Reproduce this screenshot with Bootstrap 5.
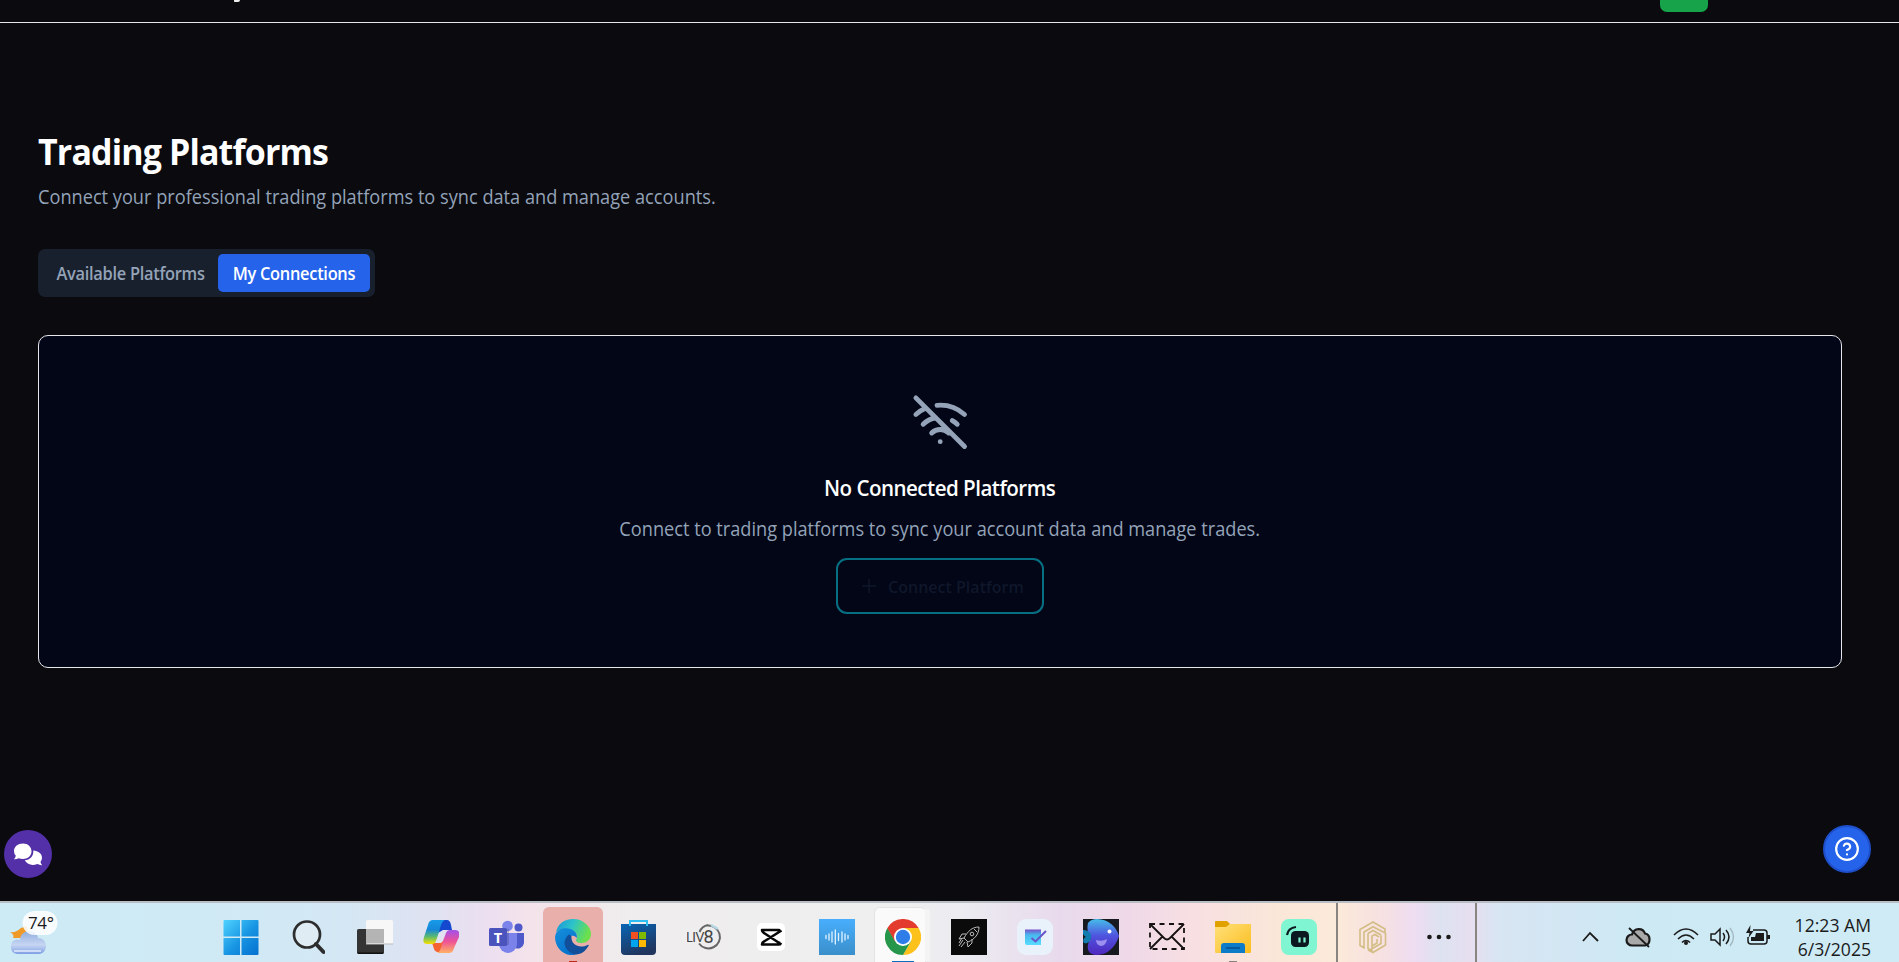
<!DOCTYPE html>
<html lang="en">
<head>
<meta charset="utf-8">
<title>Trading Platforms</title>
<link href="https://cdn.jsdelivr.net/npm/bootstrap@5.3.0/dist/css/bootstrap.min.css" rel="stylesheet">
<style>
body{font-family:"Open Sans","Noto Sans",sans-serif;background:#0a0a0f;color:#fff;width:1899px;height:962px;overflow:hidden}
.ln{line-height:28px;white-space:nowrap}
/* slightly narrowed text */
.narrow{display:inline-block;white-space:nowrap;transform:scaleX(.943)}
.from-left{transform-origin:0 50%}
.topbar{height:23px;border-bottom:1px solid #e5e7eb}
.brand-tail{left:234px;top:0;width:6px;height:2px;background:#eee;border-radius:0 0 3px 1px}
.go-btn{left:1660px;top:-28px;width:48px;height:40px;background:#16a34a;border-radius:7px}
main{height:878px;padding:107px 57px 0 38px}
h1{font-size:36px;line-height:44px;font-weight:700;margin:0 0 9px;letter-spacing:-.9px}
.muted{color:#94a3b8;font-size:19.3px}
.tabs{width:337px;height:48px;background:#18202d;border-radius:7px;padding:5px;margin-top:38px}
.tabs button{font-size:17.4px;font-weight:600;border:0;background:none;color:#94a3b8;height:38px;border-radius:5px;padding:0;letter-spacing:-.3px}
.tabs .on{background:#2563eb;color:#fff;width:152px}
.tabs .off{width:175px}
.panel{height:333px;margin-top:38px;background:#020617;border:1px solid #e5e7eb;border-radius:10px;padding-top:57px}
.panel h2{font-size:21.8px;font-weight:600;margin:23px 0 0;line-height:28px;letter-spacing:-.55px}
.panel .muted{margin-top:13px}
.connect{width:208px;height:56px;border:2px solid #076f82;border-radius:11px;color:#0f172a;font-size:17px;font-weight:600;margin-top:15px;padding-left:24px}
.fab{width:48px;height:48px;border-radius:50%}
.chat{left:4px;top:830px;background:#5330a8}
.help{left:1823px;top:825px;background:#2563eb;border:2px solid #1e4fc9}
.taskbar{height:61px;border-top:2px solid #b9bec5;color:#1b1b1b;background:linear-gradient(90deg,#cdebf5 0,#cfeaf5 190px,#d3e8f4 330px,#dfe2f1 430px,#ecdff0 490px,#f4e3ea 530px,#efedee 630px,#efefef 900px,#ececf1 960px,#e8daec 1060px,#efd9e8 1130px,#f7dfe2 1190px,#fae7d8 1280px,#fbe9d9 1340px,#f7e1e1 1380px,#eedcf1 1415px,#dde2f1 1440px,#e6dff0 1470px,#d7e5f2 1500px,#cde9f4 1640px,#ceebf6 1899px)}
.cell{width:66px;height:59px;padding-top:16px;flex:none}
.cell svg{display:block;margin:auto}
.weather{width:208px;height:59px}
.apps-edge{background:#e9afab;width:60px;margin:4px 3px 0;height:55px;padding-top:12px;border-radius:6px 6px 0 0}
.apps-chrome{background:#fafafa;width:50px;margin:5px 11px 0 5px;height:54px;padding-top:11px;border-radius:5px 5px 0 0;box-shadow:6px 0 0 -1px #f4f4f4,0 0 0 1px #e3e3e3}
.apps-chrome svg{margin-left:10px}
.mark-line{left:50%;bottom:0;height:1.5px;transform:translateX(-50%)}
.vr-line{width:2px;height:59px;background:#8a8480}
.clock{font-size:17.6px;line-height:24px;color:#1b1b1b;padding:10px 28px 0 0;width:122px}
</style>
</head>
<body class="position-relative">
<header class="topbar position-relative overflow-hidden">
<span class="brand-tail position-absolute"></span><span class="go-btn position-absolute"></span>
</header>
<main>
<h1><span class="narrow from-left">Trading Platforms</span></h1>
<p class="muted ln mb-0"><span class="narrow from-left">Connect your professional trading platforms to sync data and manage accounts.</span></p>
<div class="tabs d-flex"><button class="off"><span class="narrow">Available Platforms</span></button><button class="on"><span class="narrow">My Connections</span></button></div>
<section class="panel d-flex flex-column align-items-center">
<svg width="58.4" height="58.4" viewBox="0 0 24 24" fill="none" stroke="#94a3b8" stroke-width="2" stroke-linecap="round" stroke-linejoin="round"><path d="M12 20h.01M8.5 16.429a5 5 0 0 1 7 0M5 12.859a10 10 0 0 1 5.17-2.69M19 12.859a10 10 0 0 0-2.007-1.523M2 8.82a15 15 0 0 1 4.177-2.643M22 8.82a15 15 0 0 0-11.288-3.764M2 2l20 20"/></svg>
<h2><span class="narrow">No Connected Platforms</span></h2>
<p class="muted ln mb-0"><span class="narrow">Connect to trading platforms to sync your account data and manage trades.</span></p>
<div class="connect d-flex align-items-center"><svg class="flex-shrink-0" width="14" height="14" viewBox="0 0 14 14" stroke="#0f172a" stroke-width="1.500"><path d="M7 0v14M0 7h14"/></svg><span class="ms-2 ps-1"><span class="narrow from-left">Connect Platform</span></span></div>
</section>
</main>
<div class="fab chat position-absolute d-flex align-items-center justify-content-center"><svg width="30" height="24" viewBox="0 0 30 24"><path d="M18.500 9.500C18.500 14 14.500 17 10 17q-2.500 0-4.500-.8Q3.500 17.500 1 17.300q1.600-1.700 1.800-3.600Q1 11.800 1 9.300C1 4.500 5 1.500 10 1.500s8.500 3.500 8.500 8z" fill="#fff"/><path d="M20.300 8.500c5 .5 8.700 3 8.700 7.200q0 2.300-1.500 4 .3 2 1.700 3.500-2.600.2-4.600-1.100-2 .9-4.600.8c-4 0-7-2-8.200-4.600 5-.4 9-4 8.500-9.800z" fill="#fff"/></svg></div>
<div class="fab help position-absolute d-flex align-items-center justify-content-center"><svg width="26" height="26" viewBox="0 0 24 24" fill="none" stroke="#fff" stroke-width="2" stroke-linecap="round" stroke-linejoin="round"><circle cx="12" cy="12" r="10"/><path d="M9.090 9a3 3 0 0 1 5.830 1c0 2-3 3-3 3M12 17h.01"/></svg></div>

<footer class="taskbar d-flex">
<div class="weather flex-shrink-0"><svg width="70" height="59" viewBox="0 903 70 59"><defs><linearGradient id="cl" x2="0" y2="1"><stop stop-color="#8fadde"/><stop offset=".6" stop-color="#c6d5f2"/><stop offset="1" stop-color="#7f9fe4"/></linearGradient></defs><path d="M10 932q6 1 11-4l6-2v12H13q2-3-3-6z" fill="#ef9a28"/><path d="M17 954a7.500 7.500 0 0 1-1-14.500q3 0 4 .5c1-12 17-11 18-2 11 0 10 16 1 16z" fill="url(#cl)"/><path d="M14 951h27" stroke="#dde8fb" stroke-width="2" opacity=".8"/><rect x="22.500" y="911" width="35" height="24" rx="12" fill="#fff" opacity=".85"/><text x="28" y="929" font-size="17" letter-spacing="-.4" fill="#1b1b1b">74°</text></svg></div>
<div class="cell"><svg width="36" height="36" viewBox="0 0 36 36"><defs><linearGradient id="w" x2="1" y2="1"><stop stop-color="#4fd3ff"/><stop offset=".55" stop-color="#1793e2"/><stop offset="1" stop-color="#0370cf"/></linearGradient></defs><path d="M1.500 1H17v16.500H.5V2q0-1 1-1zM18.500 1h16q1 0 1 1v15.500h-17zM.5 19H17v17H1.500q-1 0-1-1zM18.500 19h17v16q0 1-1 1h-16z" fill="url(#w)"/></svg></div>
<div class="cell"><svg width="36" height="36" viewBox="0 0 36 36" fill="none" stroke="#2d2d2d"><circle cx="18" cy="15.500" r="13" stroke-width="2.700" fill="#dfecf4"/><path d="M27 25l7.500 8" stroke-width="4" stroke-linecap="round"/></svg></div>
<div class="cell" style="margin-left:2px"><svg width="36" height="36" viewBox="0 0 36 36"><rect y="10" width="27" height="25" rx="1.500" fill="#343434"/><path d="M1 34.200h25" stroke="#111" stroke-width="1.500"/><rect x="9" y="1" width="27" height="24" rx="1.500" fill="#f7f7f7"/><path d="M9 10h18v14H9z" fill="#b4b4b4"/><path d="M9 25h27" stroke="#bbb"/></svg></div>
<div class="cell"><svg width="36" height="36" viewBox="0 0 36 36"><defs><linearGradient id="c1" x2="0" y2="1"><stop stop-color="#169be8"/><stop offset=".4" stop-color="#1687d8"/><stop offset=".7" stop-color="#5dbb6c"/><stop offset="1" stop-color="#fbe000"/></linearGradient><linearGradient id="c2" x2="0" y2="1"><stop stop-color="#a151ea"/><stop offset=".5" stop-color="#ee5297"/><stop offset="1" stop-color="#ffb163"/></linearGradient></defs><path d="M16 1h8q3 0 4 5l1 5h-9l-5 3z" fill="#1449cf"/><path d="M9 24h9l3-3-3 12h-3c-4 0-4-4-6-9z" fill="#f4622f"/><path d="M10 1h12c-3 1-4 5-6 12l-3 9q-1 3-4 3H4c-4 0-4-3-3-7L5 6q1-5 5-5z" fill="url(#c1)"/><path d="M26 34H14c3-1 4-5 6-12l3-8q1-3 4-3h5c4 0 5 3 4 7l-5 11q-1 5-5 5z" fill="url(#c2)"/></svg></div>
<div class="cell"><svg width="36" height="36" viewBox="0 0 36 36"><circle cx="18.500" cy="7" r="5.300" fill="#7b83eb"/><circle cx="29.500" cy="8.500" r="4" fill="#5059c9"/><path d="M25 14h10v10a6.500 6.500 0 0 1-9 5z" fill="#5059c9"/><path d="M10 14h18v11a9 9 0 0 1-18 0z" fill="#7b83eb"/><path d="M10 10h10v16h-9z" fill="#000" opacity=".15"/><rect y="9" width="18" height="18" rx="1.500" fill="#4b53bc"/><text x="9" y="23.500" font-size="14.500" font-weight="700" fill="#fff" text-anchor="middle">T</text></svg></div>
<div class="cell apps-edge position-relative"><svg width="36" height="36" viewBox="0 0 36 36"><defs><linearGradient id="e1" x2="1" y2=".3"><stop stop-color="#1b94da"/><stop offset=".5" stop-color="#2cc3c9"/><stop offset="1" stop-color="#6be04c"/></linearGradient><linearGradient id="e2" x2=".6" y2="1"><stop stop-color="#178fdc"/><stop offset="1" stop-color="#0572cb"/></linearGradient></defs><path d="M1 13C3 5 9 0 18 0c11 0 18 8 18 15 0 6-5 9-9 9-5 0-7-2-5.500-4 2-3 0-7-4.500-8.500C11 9 5 9.500 1 13z" fill="url(#e1)"/><path d="M0 18C1 10 8 8.500 13 9.500c7 1 10 6 8.500 9.500-3-5-11-1-9 7 1 5 5 9 9 10C9 38 0 29 0 18z" fill="url(#e2)"/><path d="M14 15.500c-5 4-6 10-2 15 3 4 8 6 12 4.500 4-1 7-4 9.500-8 .5-1 0-1.500-1-1-8 4-17 0-16-9z" fill="#124f9a"/></svg><span class="mark-line position-absolute" style="width:8px;background:#c0281c"></span></div>
<div class="cell"><svg width="36" height="36" viewBox="0 0 36 36"><defs><linearGradient id="s" x2=".4" y2="1"><stop stop-color="#0865b5"/><stop offset="1" stop-color="#20365f"/></linearGradient></defs><path d="M0 5h35v27q0 4-4 4H4q-4 0-4-4z" fill="url(#s)"/><path d="M9 7V2h17v5" fill="none" stroke="#30bdf2" stroke-width="2"/><path d="M10 13h7v7h-7z" fill="#f25022"/><path d="M18 13h7v7h-7z" fill="#7fba00"/><path d="M10 21h7v7h-7z" fill="#00a4ef"/><path d="M18 21h7v7h-7z" fill="#ffb900"/></svg></div>
<div class="cell"><svg width="36" height="36" viewBox="0 0 36 36"><path d="M20 6.500a11.500 11.500 0 1 1-8 18M12.500 13q2.500-6 8.500-7" fill="none" stroke="#666" stroke-width="2"/><path d="M24 6l7 4" stroke="#b5d8e4" stroke-width="2.500"/><text x="-1" y="22.500" font-size="13" letter-spacing="-.4" fill="#444" font-family="Lato">LIV</text><text x="16.500" y="24" font-size="18" fill="#444" font-family="Roboto">8</text></svg></div>
<div class="cell"><svg width="36" height="36" viewBox="0 0 36 36"><rect x="4" y="4" width="28" height="28" rx="5" fill="#fff"/><path d="M28.500 11.500L11 22.500q-2 1-2 3h17v-3M28.500 25.500L11 14q-2-1-2-3h17v3" fill="none" stroke="#080808" stroke-width="2.600" stroke-linejoin="round"/></svg></div>
<div class="cell"><svg width="36" height="36" viewBox="0 0 36 36"><defs><linearGradient id="v" x2="0" y2="1"><stop stop-color="#48aefd"/><stop offset="1" stop-color="#3b8fca"/></linearGradient></defs><path d="M0 0h36v36H0z" fill="url(#v)"/><path d="M7 16.500v3M10 15v6M13 13v10M16.300 11v14M19.500 14.500v7M23 13v10M26 15v6M29 16.500v3" stroke="#e4f3ff" stroke-width="1.300" stroke-linecap="round"/></svg></div>
<div class="cell apps-chrome position-relative"><svg width="36" height="36" viewBox="0 0 36 36"><path d="M18 18V9h15.600A18 18 0 0 1 18 36l8-14z" fill="#fcc21b"/><path d="M18 18l7.800 4.500L18 36A18 18 0 0 1 2.400 9l7.800 13.500z" fill="#26964a"/><path d="M2.400 9l7.800 13.500L18 18z" fill="#26964a"/><path d="M18 9l-8 13.500L2.400 9A18 18 0 0 1 33.600 9z" fill="#e33b2e"/><circle cx="18" cy="18" r="9" fill="#fff"/><circle cx="18" cy="18" r="7.200" fill="#2f7de9"/></svg><span class="mark-line position-absolute" style="left:28px;width:22px;background:#0f6cbd"></span></div>
<div class="cell"><svg width="36" height="36" viewBox="0 0 36 36" fill="none" stroke="#bbb" stroke-width="1"><path d="M0 0h36v36H0z" fill="#0b0b0b" stroke="none"/><path d="M28 8c-7 0-11 4-15 11l4 4c7-3 11-8 11-15zM15 15h-4l-3 5 5-1M21 20v4l-4 4-1-5M12 21l-4 6M14 23l-4 5M11 19l-3 5M23 10l3 3"/><circle cx="21" cy="15" r="1.800"/></svg></div>
<div class="cell"><svg width="36" height="36" viewBox="0 0 36 36"><defs><linearGradient id="k" x2="0" y2="1"><stop stop-color="#7750ca"/><stop offset=".35" stop-color="#48b9ee"/><stop offset="1" stop-color="#58dcff"/></linearGradient></defs><rect width="36" height="36" rx="9" fill="#e9f2fa"/><path d="M8 10.500h16V26H10q-2 0-2-2z" fill="url(#k)"/><path d="M14.500 19l4 3.500L29 12" fill="none" stroke="#6654c9" stroke-width="2"/></svg></div>
<div class="cell"><svg width="36" height="36" viewBox="0 0 36 36"><defs><linearGradient id="b" x2="0" y2="1"><stop stop-color="#46bdea"/><stop offset=".45" stop-color="#4f56df"/><stop offset="1" stop-color="#4f25bd"/></linearGradient></defs><path d="M0 0h36v36H0z" fill="#171b1f"/><path d="M5 4Q8 0 14 0c12 0 20 9 22 17-3 10-11 19-22 19C3 36 3 26 8 19 4 13 4 9 5 4z" fill="url(#b)"/><path d="M0 11c5 0 9 3 8 7 0 5-4 7-7 6-2-3 0-5 2-6-3-2-4-4-3-7z" fill="#127cae"/><path d="M13 21q6 2 11-1-1 7-6 7-5-1-5-6z" fill="#9b8ff0"/><circle cx="26.500" cy="12.500" r="2" fill="#fff"/></svg></div>
<div class="cell"><svg width="36" height="36" viewBox="0 0 36 36" fill="none" stroke="#171212" stroke-width="1.800"><path d="M1 5h34v25H1z" stroke-dasharray="5 4.500"/><path d="M1 5l14 14q3 3 6 0L35 5M1 30l12-12M35 30L23 18"/></svg></div>
<div class="cell position-relative"><svg width="36" height="36" viewBox="0 0 36 36"><defs><linearGradient id="f" x2="1" y2="1"><stop stop-color="#ffe07b"/><stop offset="1" stop-color="#fbbd1d"/></linearGradient></defs><path d="M0 3q0-1 1-1h11l3 3-3 5H0z" fill="#e1a100"/><path d="M0 8h11l4-3h21v28q0 1-1 1H1q-1 0-1-1z" fill="url(#f)"/><path d="M6 34v-7q0-3 3-3h18q3 0 3 3v7z" fill="#0c7cc9"/><path d="M11 29h14" stroke="#0a4e8c" stroke-width="1.500"/></svg><span class="mark-line position-absolute" style="width:8px;background:#8a8480"></span></div>
<div class="cell"><svg width="36" height="36" viewBox="0 0 36 36"><rect width="36" height="36" rx="8" fill="#80f5d2"/><rect x="10" y="12" width="18" height="16" rx="4.500" fill="#0b1820"/><path d="M6 16q1-7 9-8" fill="none" stroke="#0b1820" stroke-width="2.200"/><path d="M18.500 18.500v5M23.500 18.500v5" stroke="#80f5d2" stroke-width="2.200"/></svg></div>
<div class="vr-line" style="margin-left:4px"></div>
<div class="cell" style="margin-left:2px"><svg width="36" height="36" viewBox="0 0 36 36" fill="none" stroke="#d3bd85" stroke-width="1.600"><path d="M18 3L5 10.500v16l4 2.300V13l9-5.300L30 14v-4zM13 14.500l5-3 8 4.500M13 14.500v15l4 2.500V17l3-1.500 4 2.500M30.500 14v12L18 33.500l-4-2 12-7v-8M22 20v4l-5 3"/></svg></div>
<div class="cell"><svg width="36" height="36" viewBox="0 0 36 36" fill="#1b1b1b"><circle cx="8.500" cy="18" r="2.300"/><circle cx="18" cy="18" r="2.300"/><circle cx="27.500" cy="18" r="2.300"/></svg></div>
<div class="vr-line" style="margin-left:3px"></div>
<div class="ms-auto d-flex"><svg width="200" height="59" viewBox="1577 903 200 59" fill="none" stroke="#1b1b1b" stroke-width="1.800"><path d="M1583 941l7-8 8 8"/><path d="M1632 945.500a5.500 5.500 0 0 1 0-11c2-7 11-7 13-1 6 1 6 11 0 12z" fill="#a9a9a9" stroke-width="2.200"/><path d="M1629 928l20 19"/><path d="M1674 935q12-12 24 0M1678 939q8-8 16 0M1682 942.500q4-4 8 0" stroke-width="1.600"/><circle cx="1686" cy="943" r="2" fill="#1b1b1b" stroke="none"/><path d="M1711 934h4l5-5v16l-5-5h-4z" stroke-width="1.500"/><path d="M1723 933q3 4 0 8M1726 930q6 7 0 14" stroke-width="1.500"/><path d="M1730 928q7 9 0 18" stroke="#a3b7c0" stroke-width="1.300"/><path d="M1753 930h11q3 0 3 3v8q0 3-3 3h-13q-3 0-3-3v-4" stroke-width="1.500"/><path d="M1756 933h8v8h-13v-4h4z" fill="#1b1b1b" stroke="none"/><path d="M1750.500 925l-4.500 8h3.500l-1 5 5-7h-3.500z" fill="#1b1b1b" stroke="none"/><path d="M1768.500 935v4" stroke-width="3"/></svg></div>
<div class="clock text-end flex-shrink-0"><div>12:23 AM</div><div>6/3/2025</div></div>
</footer>
<script src="https://cdn.jsdelivr.net/npm/bootstrap@5.3.0/dist/js/bootstrap.bundle.min.js"></script>
</body>
</html>
